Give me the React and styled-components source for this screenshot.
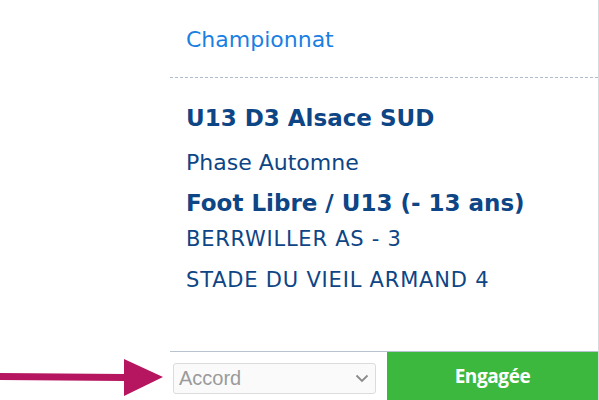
import React from 'react';
import styled, { createGlobalStyle } from 'styled-components';

const GlobalStyle = createGlobalStyle`
  html, body {
    margin: 0;
    padding: 0;
    background: #ffffff;
  }
  body {
    font-family: "DejaVu Sans", "Noto Sans", sans-serif;
  }
`;

const Page = styled.div`
  width: 599px;
  height: 400px;
  overflow: hidden;
  display: flex;
  background: #ffffff;
`;

const Gutter = styled.div`
  width: 170px;
  flex: none;
  display: flex;
  align-items: flex-end;
  padding-bottom: 4px;
  box-sizing: border-box;
`;

const Card = styled.section`
  width: 428px;
  flex: none;
  display: flex;
  flex-direction: column;
  border-right: 1px solid #d6d9dd;
`;

const Header = styled.div`
  height: 78px;
  box-sizing: border-box;
  padding: 26px 0 0 16px;
  border-bottom: 1px dashed #aebccb;
`;

const Category = styled.div`
  font-size: 22px;
  line-height: 28px;
  color: #1a7fe3;
`;

const Body = styled.div`
  flex: 1;
  padding: 25px 0 0 16px;
  color: #0d4585;
`;

const Line = styled.div`
  font-size: ${p => p.$size}px;
  font-weight: ${p => (p.$bold ? 700 : 400)};
  letter-spacing: ${p => p.$ls || 0}px;
  line-height: 30px;
  height: 30px;
  margin-top: ${p => p.$mt || 0}px;
  white-space: nowrap;
`;

const Footer = styled.div`
  height: 49px;
  box-sizing: border-box;
  border-top: 1px solid #b8c3cf;
  display: flex;
  align-items: stretch;
`;

const SelectBox = styled.div`
  width: 203px;
  margin: 11px 11px 6px 3px;
  box-sizing: border-box;
  border: 1px solid #dcdcdc;
  border-radius: 3px;
  background: #fafafa;
  display: flex;
  align-items: center;
  justify-content: space-between;
  padding: 0 6px 0 5px;
  font-family: "Liberation Sans", Arial, sans-serif;
  font-size: 20px;
  color: #9b9b9b;
`;

const EngageButton = styled.button`
  flex: 1;
  border: none;
  margin: 0;
  background: #3cb83e;
  color: #ffffff;
  font-family: "Open Sans", "Noto Sans", sans-serif;
  font-weight: 700;
  font-size: 19px;
  letter-spacing: -0.4px;
  cursor: pointer;
`;

const Arrow = () => (
  <svg width="165" height="40" viewBox="0 0 165 40">
    <polygon points="0,17 124,18 124,25 0,24" fill="#b5165f" />
    <polygon points="124,3 163,21 124,40" fill="#b5165f" />
  </svg>
);

const Chevron = () => (
  <svg width="14" height="9" viewBox="0 0 14 9">
    <path d="M1.5 1.5 L7 7 L12.5 1.5" fill="none" stroke="#8a8a8a" strokeWidth="1.8" />
  </svg>
);

export default function App() {
  return (
    <>
      <GlobalStyle />
      <Page>
        <Gutter>
          <Arrow />
        </Gutter>
        <Card>
          <Header>
            <Category>Championnat</Category>
          </Header>
          <Body>
            <Line $bold $size={23}>U13 D3 Alsace SUD</Line>
            <Line $size={22} $mt={15}>Phase Automne</Line>
            <Line $bold $size={23} $mt={10}>Foot Libre / U13 (- 13 ans)</Line>
            <Line $size={21} $ls={0.75} $mt={6}>BERRWILLER AS - 3</Line>
            <Line $size={21} $ls={0.8} $mt={11}>STADE DU VIEIL ARMAND 4</Line>
          </Body>
          <Footer>
            <SelectBox>
              <span>Accord</span>
              <Chevron />
            </SelectBox>
            <EngageButton>Engagée</EngageButton>
          </Footer>
        </Card>
      </Page>
    </>
  );
}
